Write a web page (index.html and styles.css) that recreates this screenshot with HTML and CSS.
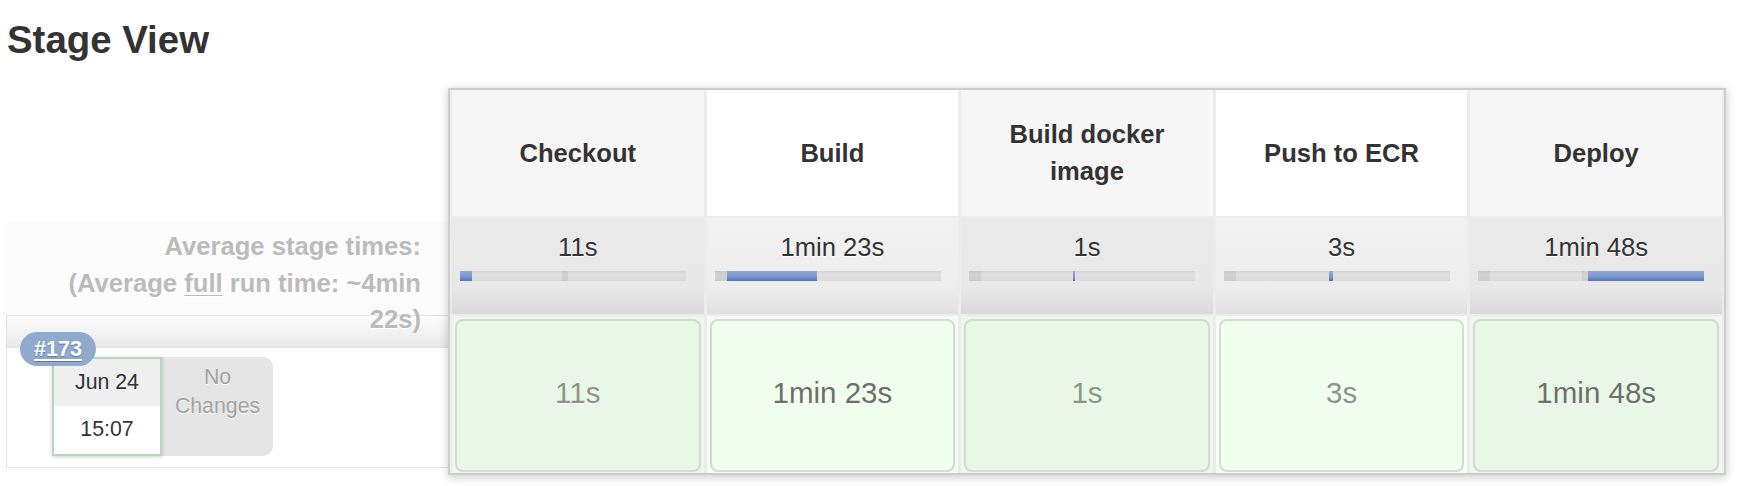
FILE: index.html
```html
<!DOCTYPE html>
<html>
<head>
<meta charset="utf-8">
<link rel="stylesheet" href="styles.css">
</head>
<body>
<h2 class="title">Stage View</h2>
<div class="stage-view">
  <div class="side">
    <div class="avg-label">Average stage times:<br>(Average <u>full</u> run time: ~4min 22s)</div>
    <div class="build-box">
      <div class="band"></div>
      <a class="badge">#173</a>
      <div class="build-meta">
        <div class="date-box">
          <div class="date">Jun 24</div>
          <div class="time">15:07</div>
        </div>
        <div class="changes">No<br>Changes</div>
      </div>
    </div>
  </div>
  <div class="table">
    <div class="head odd">Checkout</div>
    <div class="head even">Build</div>
    <div class="head odd">Build docker image</div>
    <div class="head even">Push to ECR</div>
    <div class="head odd">Deploy</div>

    <div class="avg odd"><div class="avg-time">11s</div>
      <div class="bar"><span class="seg grey" style="left:102px;width:6px"></span><span class="seg blue" style="left:0;width:12px"></span></div></div>
    <div class="avg even"><div class="avg-time">1min 23s</div>
      <div class="bar"><span class="seg grey" style="left:0;width:12px"></span><span class="seg blue" style="left:12px;width:90px"></span></div></div>
    <div class="avg odd"><div class="avg-time">1s</div>
      <div class="bar"><span class="seg grey" style="left:0;width:12px"></span><span class="seg blue" style="left:104px;width:2px"></span></div></div>
    <div class="avg even"><div class="avg-time">3s</div>
      <div class="bar"><span class="seg grey" style="left:0;width:12px"></span><span class="seg blue" style="left:105px;width:4px"></span></div></div>
    <div class="avg odd"><div class="avg-time">1min 48s</div>
      <div class="bar"><span class="seg grey" style="left:0;width:12px"></span><span class="seg grey" style="left:104px;width:6px"></span><span class="seg blue" style="left:110px;width:116px"></span></div></div>

    <div class="cell odd"><div class="box light">11s</div></div>
    <div class="cell even"><div class="box dark">1min 23s</div></div>
    <div class="cell odd"><div class="box light">1s</div></div>
    <div class="cell even"><div class="box light">3s</div></div>
    <div class="cell odd"><div class="box dark">1min 48s</div></div>
  </div>
</div>
</body>
</html>
```
FILE: styles.css
```css
html, body {
  margin: 0;
  padding: 0;
  background: #fff;
}
body {
  font-family: "Liberation Sans", Arial, Helvetica, sans-serif;
  color: #333;
  width: 1740px;
  height: 486px;
  overflow: hidden;
}
.title {
  margin: 0;
  padding: 18px 0 0 7px;
  font-size: 38.4px;
  font-weight: bold;
  line-height: normal;
  color: #333;
}
.stage-view {
  display: flex;
  align-items: flex-start;
  margin-top: 26px;
}
.side {
  width: 442px;
  margin-left: 6px;
  padding-top: 134px;
}
.avg-label {
  position: relative;
  z-index: 2;
  height: 93px;
  box-sizing: border-box;
  padding: 6px 27px 0 30px;
  background: #fcfcfc;
  text-align: right;
  font-size: 25.6px;
  line-height: 36.6px;
  font-weight: bold;
  color: #bbb;
  text-shadow: 0 1px 0 #fff;
}
.avg-label u {
  text-decoration-thickness: 1px;
  text-underline-offset: 3px;
}
.build-box {
  position: relative;
  height: 153px;
  box-sizing: border-box;
  border: 1px solid #e2e2e2;
  border-right: none;
  background: #fff;
}
.band {
  height: 32px;
  background: linear-gradient(#fdfdfd, #e8e8e8);
}
.badge {
  position: absolute;
  left: 13px;
  top: 16px;
  z-index: 3;
  width: 76px;
  height: 34px;
  border-radius: 17px;
  background: #8eaacf;
  color: #fff;
  font-weight: bold;
  font-size: 21.6px;
  line-height: 34px;
  text-align: center;
  text-decoration: underline;
  text-decoration-thickness: 2px;
  text-underline-offset: 3px;
  text-shadow: 0 1px 1px rgba(0, 0, 0, 0.3);
}
.build-meta {
  display: flex;
  margin: 9px 0 0 45px;
}
.date-box {
  position: relative;
  z-index: 1;
  width: 110px;
  box-sizing: border-box;
  border: 2px solid #b8d5c3;
  background: #fff;
  box-shadow: 0 1px 4px rgba(0, 0, 0, 0.18);
  font-size: 21.3px;
  text-align: center;
  color: #333;
}
.date {
  height: 47px;
  line-height: 47px;
  background: #efefef;
}
.time {
  height: 48px;
  line-height: 46px;
}
.changes {
  width: 111px;
  height: 99px;
  box-sizing: border-box;
  padding-top: 6px;
  background: #e5e5e5;
  border-radius: 0 10px 10px 0;
  font-size: 21.3px;
  line-height: 29px;
  text-align: center;
  color: #a3a3a3;
  text-shadow: 0 1px 0 #fff;
}
.table {
  position: relative;
  z-index: 5;
  width: 1278px;
  box-sizing: border-box;
  border: 2px solid #cdcdcd;
  padding: 0 2px;
  background: #ececec;
  box-shadow: 0 2px 9px rgba(0, 0, 0, 0.22);
  display: grid;
  grid-template-columns: repeat(5, 1fr);
  grid-template-rows: 126px 96px 157px;
  column-gap: 3px;
  row-gap: 2px;
}
.head {
  display: flex;
  align-items: center;
  justify-content: center;
  padding: 0 14px;
  text-align: center;
  font-size: 25.6px;
  line-height: 36.6px;
  font-weight: bold;
  color: #333;
  text-shadow: 0 1px 0 #fff;
}
.head.odd { background: #f6f6f6; }
.head.even { background: #fff; }
.avg {
  padding-top: 14px;
  box-sizing: border-box;
}
.avg.odd { background: linear-gradient(#eaeaea 0%, #e8e8e8 72%, #dadada 100%); }
.avg.even { background: linear-gradient(#f1f1f1 0%, #eeeeee 72%, #e0e0e0 100%); }
.avg-time {
  text-align: center;
  font-size: 25.6px;
  line-height: 30px;
  color: #333;
  text-shadow: 0 1px 1px #fff;
}
.bar {
  position: relative;
  margin: 9px 0 0 8px;
  width: 226px;
  height: 10px;
  background: linear-gradient(#d4d4d4, #e0e0e0 35%, #dbdbdb);
}
.seg {
  position: absolute;
  top: 0;
  height: 10px;
}
.seg.grey { background: linear-gradient(#c9c9c9, #d3d3d3 40%, #cccccc); }
.seg.blue { background: linear-gradient(#93aad6, #7b96d0 55%, #5576c5); }
.cell {
  padding: 3px 3px 1px;
  box-sizing: border-box;
}
.cell.odd { background: #eef7ec; }
.cell.even { background: #f3fdf1; }
.box {
  height: 100%;
  box-sizing: border-box;
  border: 2px solid #d7d9d6;
  border-radius: 8px;
  padding-bottom: 6px;
  display: flex;
  align-items: center;
  justify-content: center;
  font-size: 29.5px;
  text-shadow: 0 1px 1px #fff;
}
.cell.odd .box { background: #e9f8e6; }
.cell.even .box { background: #f0ffee; }
.box.light { color: #8b9588; }
.box.dark { color: #6c706b; }
```
